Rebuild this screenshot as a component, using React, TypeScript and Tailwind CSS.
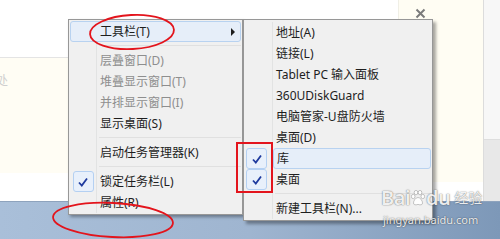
const font = { fontFamily: '"Noto Sans", "Noto Sans CJK SC", sans-serif' };

const Check = () => (
  <svg width="12" height="12" viewBox="0 0 12 12">
    <path d="M2 6.5 L4.8 9.5 L10 2.5" fill="none" stroke="#1e3a9e" strokeWidth="1.8" />
  </svg>
);

const CheckBox = () => (
  <div className="w-[21px] h-[21px] rounded-[3px] border border-[#b4d0f2] bg-[#e8f0fb] flex items-center justify-center">
    <Check />
  </div>
);

const Sep = ({ left }: { left: string }) => (
  <div className={`h-[8px] flex items-center ${left}`}>
    <div className="flex-1 h-[2px] border-t border-[#e0e0e0] border-b-white" />
  </div>
);

type Item = { label: string; disabled?: boolean; checked?: boolean };

const MainItem = ({ label, disabled, checked }: Item) => (
  <div className="h-[21px] flex items-center">
    <div className="w-[26px] flex justify-center">{checked && <CheckBox />}</div>
    <span className={`pl-[4px] ${disabled ? "text-[#8e8e8e]" : "text-[#1e1e1e]"}`}>{label}</span>
  </div>
);

const SubItem = ({ label, checked, hover }: Item & { hover?: boolean }) => (
  <div className="h-[21px] flex items-center">
    <div className="w-[28px] pl-[1px] flex">{checked && <CheckBox />}</div>
    <div
      className={`flex-1 h-full flex items-center pl-[3px] mr-[1px] rounded-[3px] ${
        hover ? "bg-[#e6eef9] border border-[#b8d2f0] pl-[2px]" : ""
      }`}
    >
      <span className="text-[#1e1e1e]">{label}</span>
    </div>
  </div>
);

// baidu paw mark
const Paw = () => (
  <svg width="14" height="16" viewBox="0 0 14 16" className="mx-[1px]">
    <g fill="rgba(255,255,255,0.9)" stroke="rgba(0,0,0,0.3)" strokeWidth="0.7">
      <ellipse cx="2.2" cy="6.5" rx="1.8" ry="2.2" />
      <ellipse cx="5" cy="2.6" rx="1.8" ry="2.2" />
      <ellipse cx="9" cy="2.6" rx="1.8" ry="2.2" />
      <ellipse cx="11.8" cy="6.5" rx="1.8" ry="2.2" />
      <path d="M7 7.5 C4.5 7.5 2.5 11 2.5 13 C2.5 15 4.5 15.2 7 14.4 C9.5 15.2 11.5 15 11.5 13 C11.5 11 9.5 7.5 7 7.5 Z" />
    </g>
  </svg>
);

export default function App() {
  return (
    <div className="relative w-[500px] h-[239px] overflow-hidden bg-white text-[12px] leading-none" style={font}>
      {/* desktop background */}
      <div className="flex flex-col h-full">
        <div className="h-[201px] flex">
          <div className="w-[398px] flex flex-col">
            <div className="h-[57px] bg-white" />
            <div className="h-[116px] bg-[#fffdf4] border-t border-[#e4e4e4] pt-[17px]">
              <span className="-ml-[4px] text-[12px] text-[#cfcfcf]">处</span>
            </div>
            <div className="flex-1 bg-white" />
          </div>
          <div className="w-[85px] flex flex-col">
            <div className="h-[182px] bg-[#fffdf3] border-l border-[#f0efe6] pl-[16px] pt-[8px]">
              <svg width="11" height="11" viewBox="0 0 11 11">
                <path d="M1.5 1.5 L9.5 9.5 M9.5 1.5 L1.5 9.5" stroke="#7b7b7b" strokeWidth="2" />
              </svg>
            </div>
            <div className="flex-1 bg-white" />
          </div>
          <div className="flex-1 flex flex-col border-l border-[#dcdcdc]">
            <div className="h-[140px] bg-[#f7f7f7] border-b border-[#dedede]" />
            <div className="flex-1 bg-[#e8e8e8]" />
          </div>
        </div>
        <div className="flex-1 border-t border-[#8ea3bd] bg-gradient-to-r from-[#a9bfd9] via-[#9fb5d0] to-[#7d98b8]" />
      </div>

      {/* context menu */}
      <div className="absolute left-[68px] top-[19px] w-[175px] bg-[#f0f0f0] border border-[#979797] p-[1px] shadow-[2px_2px_3px_rgba(0,0,0,0.35)]">
        <div className="relative">
          <div className="absolute left-[26px] top-[21px] bottom-0 w-[2px] border-l border-[#e2e3e3] border-r-white" />
          <div className="h-[21px] flex items-center rounded-[3px] border border-[#b8d2f0] bg-[#e6eef9]">
            <span className="pl-[29px] text-[#1e1e1e]">工具栏(T)</span>
            <span className="ml-auto mr-[5px] w-0 h-0 border-y-[4px] border-y-transparent border-l-[4px] border-l-[#1e1e1e]" />
          </div>
          <Sep left="ml-[29px]" />
          <MainItem label="层叠窗口(D)" disabled />
          <MainItem label="堆叠显示窗口(T)" disabled />
          <MainItem label="并排显示窗口(I)" disabled />
          <MainItem label="显示桌面(S)" />
          <Sep left="ml-[29px]" />
          <MainItem label="启动任务管理器(K)" />
          <Sep left="ml-[29px]" />
          <MainItem label="锁定任务栏(L)" checked />
          <MainItem label="属性(R)" />
        </div>
      </div>

      {/* toolbar submenu */}
      <div className="absolute left-[243px] top-[19px] w-[190px] bg-[#f0f0f0] border border-[#979797] pt-[2px] pb-[1px] pl-[1px] shadow-[3px_3px_3px_rgba(0,0,0,0.35)]">
        <div className="relative">
          <div className="absolute left-[27px] top-0 bottom-0 w-[2px] border-l border-[#e2e3e3] border-r-white" />
          <SubItem label="地址(A)" />
          <SubItem label="链接(L)" />
          <SubItem label="Tablet PC 输入面板" />
          <SubItem label="360UDiskGuard" />
          <SubItem label="电脑管家-U盘防火墙" />
          <SubItem label="桌面(D)" />
          <SubItem label="库" checked hover />
          <SubItem label="桌面" checked />
          <Sep left="ml-[30px]" />
          <SubItem label="新建工具栏(N)..." />
        </div>
      </div>

      {/* watermark */}
      <div className="absolute left-[381px] top-[187px] flex flex-col items-start text-white/90 [text-shadow:0_0_1px_rgba(0,0,0,0.55),0_0_2px_rgba(0,0,0,0.25)]">
        <div className="flex items-center h-[22px]">
          <span className="text-[20px] font-semibold tracking-[-0.5px]">Bai</span>
          <Paw />
          <span className="text-[20px] font-semibold tracking-[-0.5px]">du</span>
          <span className="ml-[4px] text-[14px]">经验</span>
        </div>
        <span className="text-[11px] mt-[5px] ml-[2px]">jingyan.baidu.com</span>
      </div>

      {/* red annotations */}
      <svg className="absolute inset-0 pointer-events-none" width="500" height="239">
        <ellipse cx="132" cy="32" rx="42" ry="17" fill="none" stroke="#e3141c" strokeWidth="1.8" transform="rotate(-3 132 32)" />
        <ellipse cx="113" cy="220" rx="60" ry="17" fill="none" stroke="#e3141c" strokeWidth="1.8" transform="rotate(3 113 220)" />
        <rect x="237" y="143" width="35" height="49" fill="none" stroke="#e3141c" strokeWidth="2" />
      </svg>
    </div>
  );
}
